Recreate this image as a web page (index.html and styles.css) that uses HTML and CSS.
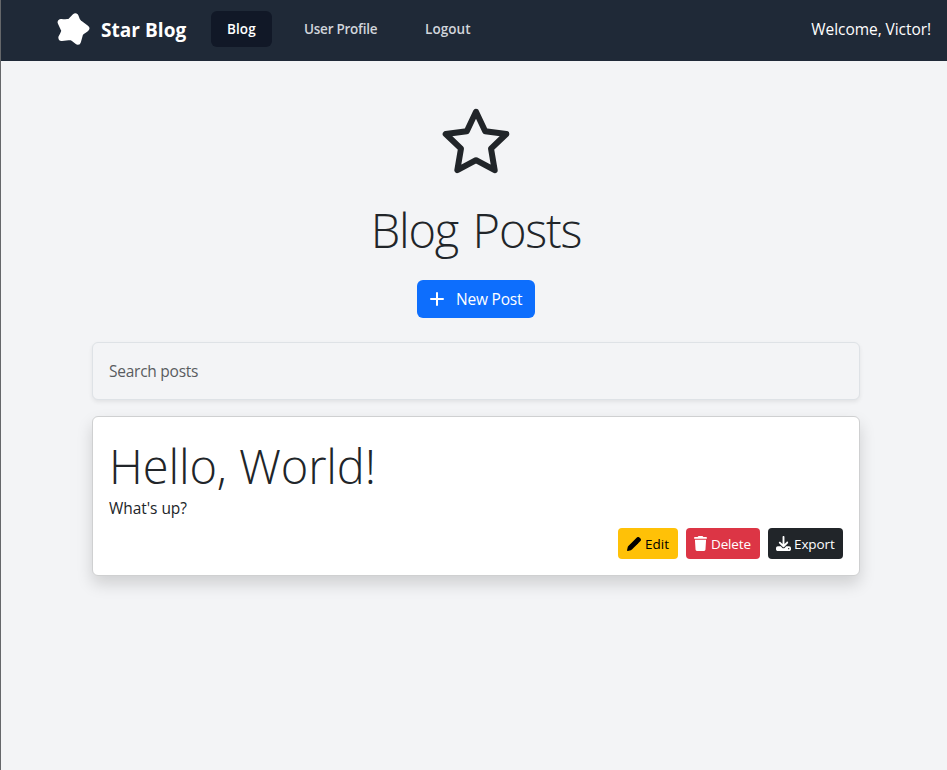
FILE: index.html
```html
<!DOCTYPE html>
<html lang="en">
<head>
<meta charset="utf-8">
<title>Star Blog</title>
<link rel="stylesheet" href="styles.css">
</head>
<body>
<nav class="navbar">
  <a class="brand">
    <svg class="brand-icon" width="34" height="34" viewBox="0 0 102 102"><path d="M58 17 Q63 34 71 38 L90 52 Q73 63 71 69 L65 91 Q50 78 43 77 L17 80 Q26 64 26 58 L15 34 Q32 36 42 33 Z"/></svg>
    <span class="brand-name">Star Blog</span>
  </a>
  <div class="nav-links">
    <a class="nav-link active"><span>Blog</span></a>
    <a class="nav-link profile"><span>User Profile</span></a>
    <a class="nav-link logout"><span>Logout</span></a>
  </div>
  <span class="welcome">Welcome, Victor!</span>
</nav>
<main class="content">
  <header class="hero">
    <svg class="hero-icon" width="72" height="72" viewBox="440 106 72 72"><path d="M476 111.8 L485.2 131.2 L506.3 134 L491 148.6 L494.7 170.2 L476 160.2 L457.3 170.2 L461 148.6 L445.7 134 L466.8 131.2 Z"/></svg>
    <h1 class="title page-title">Blog Posts</h1>
    <button class="btn new-post">
      <svg width="14" height="14" viewBox="0 0 14 14"><path d="M7 1v12M1 7h12"/></svg>
      <span>New Post</span>
    </button>
  </header>
  <input class="search" type="text" placeholder="Search posts">
  <article class="card">
    <h2 class="title post-title">Hello, World!</h2>
    <p class="post-body">What's up?</p>
    <div class="actions">
      <button class="btn small edit"><svg width="14" height="14" viewBox="0 0 512 512"><path d="M410 231l-90-90-191 191-41 7-7 42-32 10-20 68 68-20 10-32 42-7zM362 19l-20 20-90 90L50 331c-10 10-18 23-22 37L1 481c-5 18 12 35 30 30l113-30c14-4 27-12 37-22l202-202 90-90 20-20c25-25 25-66 0-91l-40-39c-25-25-66-25-91 0z"/><path d="M320 141l90 90-271 190-77-3 25-80z"/></svg><span>Edit</span></button>
      <button class="btn small delete"><svg width="13" height="15" viewBox="0 0 448 512"><path d="M135 18C140 7 151 0 163 0h121c12 0 23 7 28 18l8 14h96c18 0 32 14 32 32s-14 32-32 32H32C14 96 0 82 0 64s14-32 32-32h96zM32 128h384l-21 339c-2 25-23 45-48 45H101c-25 0-46-20-48-45z"/></svg><span>Delete</span></button>
      <button class="btn small export"><svg width="15" height="15" viewBox="0 0 512 512"><path d="M288 32c0-18-14-32-32-32s-32 14-32 32v243l-73-74c-13-12-33-12-46 0s-12 33 0 46l128 128c13 12 33 12 46 0l128-128c12-13 12-33 0-46s-33-12-46 0l-73 74zM64 352c-35 0-64 29-64 64v32c0 35 29 64 64 64h384c35 0 64-29 64-64v-32c0-35-29-64-64-64H346l-45 45c-25 25-66 25-91 0l-45-45zm368 56a24 24 0 110 48 24 24 0 010-48z"/></svg><span>Export</span></button>
    </div>
  </article>
</main>
</body>
</html>
```

FILE: styles.css
```css
* { box-sizing: border-box; }
body {
  margin: 0;
  min-height: 770px;
  padding-left: 1px;
  background: linear-gradient(#65676a, #65676a) left / 1px 100% no-repeat #f3f4f6;
  color: #212529;
  font: 15.5px/24px "Open Sans", "Noto Sans", sans-serif;
}
.navbar {
  display: flex;
  align-items: center;
  height: 61px;
  padding: 0 16px 3px 55px;
  background: #1f2937;
  color: #fff;
}
.brand { display: flex; align-items: center; gap: 11px; width: 155px; white-space: nowrap; }
.brand-icon { flex: none; margin-top: -2px; }
.brand-icon path { fill: #fff; stroke: #fff; stroke-width: 20; stroke-linejoin: round; }
.brand-name { font-size: 19px; font-weight: 700; letter-spacing: .05px; padding-top: 2px; }
.nav-links { display: flex; gap: 16px; }
.nav-link {
  display: flex;
  height: 36px;
  align-items: center;
  padding: 0 16px;
  border-radius: 6px;
  color: #d1d5db;
  font-size: 13.5px;
  font-weight: 600;
  white-space: nowrap;
}
.active { width: 61px; background: #111827; color: #fff; letter-spacing: .1px; }
.profile { width: 105px; letter-spacing: -.25px; }
.logout { letter-spacing: .08px; }
.welcome { margin-left: auto; white-space: nowrap; letter-spacing: -.06px; }
.content { width: 768px; margin: 0 auto; position: relative; left: 2px; }
.hero { display: flex; flex-direction: column; align-items: center; padding-top: 45px; }
.hero-icon path { fill: none; stroke: #212529; stroke-width: 6; stroke-linejoin: round; }
.title { margin: 0; font-size: 47px; font-weight: 300; line-height: 58px; white-space: nowrap; }
.page-title { margin-top: 23px; letter-spacing: -1.2px; word-spacing: 3.5px; }
.post-title { letter-spacing: -.12px; }
.btn { display: flex; align-items: center; border: 0; font: inherit; white-space: nowrap; }
.new-post {
  width: 118px;
  height: 38px;
  margin-top: 21px;
  padding: 0 13px;
  gap: 12px;
  border-radius: 6px;
  background: #0d6efd;
  color: #fff;
  letter-spacing: -.2px;
}
.new-post svg { flex: none; fill: none; stroke: #fff; stroke-width: 2; stroke-linecap: round; }
.search {
  display: block;
  width: 100%;
  height: 58px;
  margin-top: 24px;
  padding: 0 16px;
  border: 1px solid #dee2e6;
  border-radius: 6px;
  background: #f3f4f6;
  box-shadow: 0 2px 4px rgba(0, 0, 0, .075);
  font: inherit;
  letter-spacing: -.25px;
}
.search::placeholder { color: #595c5f; opacity: 1; }
.card {
  height: 160px;
  margin-top: 16px;
  padding: 20px 16px 16px;
  border: 1px solid #cfd0d1;
  border-radius: 6px;
  background: #fff;
  box-shadow: 0 8px 16px rgba(0, 0, 0, .15);
}
.post-body { margin: 1px 0 8px; letter-spacing: -.05px; }
.actions { display: flex; justify-content: flex-end; gap: 8px; }
.small { height: 31px; padding: 0 9px; gap: 4px; border-radius: 4px; font-size: 13.5px; }
.small svg { flex: none; fill: currentColor; }
.edit { width: 60px; background: #ffc107; color: #000; }
.delete { width: 74px; padding-left: 8px; background: #dc3545; color: #fff; letter-spacing: -.15px; }
.export { width: 75px; padding-left: 8px; gap: 3px; background: #212529; color: #fff; letter-spacing: -.1px; }
```
